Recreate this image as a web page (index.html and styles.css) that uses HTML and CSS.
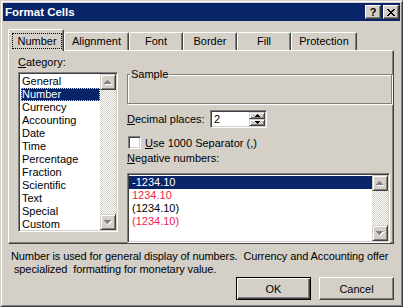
FILE: index.html
```html
<!DOCTYPE html>
<html lang="en">
<head>
  <meta charset="UTF-8">
  <title>Format Cells</title>
  <link rel="stylesheet" href="styles.css">
</head>
<body>
  <div class="window">
    <div class="titlebar">
      <span class="title">Format Cells</span>
      <div class="title-buttons">
        <div class="tbtn help">?</div>
        <div class="tbtn close">
          <svg width="8" height="7" viewBox="0 0 8 7" shape-rendering="crispEdges"><path fill="#000" d="M0 0h2v1H0z M6 0h2v1H6z M1 1h2v1H1z M5 1h2v1H5z M2 2h4v1H2z M3 3h2v1H3z M2 4h4v1H2z M1 5h2v1H1z M5 5h2v1H5z M0 6h2v1H0z M6 6h2v1H6z"/></svg>
        </div>
      </div>
    </div>

    <div class="tabs">
      <div class="tab active tab-number"><span class="focus">Number</span></div>
      <div class="tab tab-alignment">Alignment</div>
      <div class="tab tab-font">Font</div>
      <div class="tab tab-border">Border</div>
      <div class="tab tab-fill">Fill</div>
      <div class="tab tab-protection">Protection</div>
    </div>

    <div class="panel">
      <div class="col-left">
        <div class="lbl"><u>C</u>ategory:</div>
        <div class="listbox cat-list">
          <ul class="items">
            <li>General</li>
            <li class="sel focused">Number</li>
            <li>Currency</li>
            <li>Accounting</li>
            <li>Date</li>
            <li>Time</li>
            <li>Percentage</li>
            <li>Fraction</li>
            <li>Scientific</li>
            <li>Text</li>
            <li>Special</li>
            <li>Custom</li>
          </ul>
          <div class="vscroll">
            <div class="sbtn">
              <svg width="8" height="5" viewBox="0 0 8 5" shape-rendering="crispEdges"><path fill="#fff" d="M4 1h1v1H4z M3 2h3v1H3z M2 3h5v1H2z M1 4h7v1H1z"/><path fill="#808080" d="M3 0h1v1H3z M2 1h3v1H2z M1 2h5v1H1z M0 3h7v1H0z"/></svg>
            </div>
            <div class="track"></div>
            <div class="sbtn">
              <svg width="8" height="5" viewBox="0 0 8 5" shape-rendering="crispEdges"><path fill="#fff" d="M1 1h7v1H1z M2 2h5v1H2z M3 3h3v1H3z M4 4h1v1H4z"/><path fill="#808080" d="M0 0h7v1H0z M1 1h5v1H1z M2 2h3v1H2z M3 3h1v1H3z"/></svg>
            </div>
          </div>
        </div>
      </div>

      <div class="col-right">
        <fieldset class="sample">
          <legend>Sample</legend>
          <div class="sample-body"></div>
        </fieldset>

        <div class="decimal-row">
          <div class="lbl dec-label"><u>D</u>ecimal places:</div>
          <div class="spin">
            <span class="spin-value">2</span>
            <div class="spin-btns">
              <div class="spin-btn">
                <svg width="5" height="3" viewBox="0 0 5 3" shape-rendering="crispEdges"><path fill="#000" d="M2 0h1v1H2z M1 1h3v1H1z M0 2h5v1H0z"/></svg>
              </div>
              <div class="spin-btn">
                <svg width="5" height="3" viewBox="0 0 5 3" shape-rendering="crispEdges"><path fill="#000" d="M0 0h5v1H0z M1 1h3v1H1z M2 2h1v1H2z"/></svg>
              </div>
            </div>
          </div>
        </div>

        <div class="check-row">
          <span class="checkbox"></span>
          <span><u>U</u>se 1000 Separator (,)</span>
        </div>

        <div class="lbl neg-label"><u>N</u>egative numbers:</div>
        <div class="listbox neg-list">
          <ul class="items">
            <li class="sel">-1234.10</li>
            <li class="red">1234.10</li>
            <li>(1234.10)</li>
            <li class="red">(1234.10)</li>
          </ul>
          <div class="vscroll">
            <div class="sbtn">
              <svg width="8" height="5" viewBox="0 0 8 5" shape-rendering="crispEdges"><path fill="#fff" d="M4 1h1v1H4z M3 2h3v1H3z M2 3h5v1H2z M1 4h7v1H1z"/><path fill="#808080" d="M3 0h1v1H3z M2 1h3v1H2z M1 2h5v1H1z M0 3h7v1H0z"/></svg>
            </div>
            <div class="track"></div>
            <div class="sbtn">
              <svg width="8" height="5" viewBox="0 0 8 5" shape-rendering="crispEdges"><path fill="#fff" d="M1 1h7v1H1z M2 2h5v1H2z M3 3h3v1H3z M4 4h1v1H4z"/><path fill="#808080" d="M0 0h7v1H0z M1 1h5v1H1z M2 2h3v1H2z M3 3h1v1H3z"/></svg>
            </div>
          </div>
        </div>
      </div>
    </div>

    <p class="desc">Number is used for general display of numbers.  Currency and Accounting offer
 specialized  formatting for monetary value.</p>

    <div class="actions">
      <button class="btn default">OK</button>
      <button class="btn">Cancel</button>
    </div>
  </div>
</body>
</html>
```

FILE: styles.css
```css
* { box-sizing: border-box; }
body {
  margin: 0;
  font-family: 'Liberation Sans', Arial, sans-serif;
  font-size: 11px;
  color: #000;
  background-color: #d4d0c8;
}
.window {
  width: 403px;
  height: 307px;
  background-color: #d4d0c8;
  border: 1px solid;
  border-color: #d4d0c8 #404040 #404040 #d4d0c8;
  box-shadow: inset 1px 1px #fff, inset -1px -1px #808080;
  padding: 2px;
}

/* title bar */
.titlebar {
  height: 18px;
  background-color: #0a246a;
  display: flex;
  align-items: center;
  justify-content: space-between;
  padding: 0 1px 0 2px;
}
.title {
  color: white;
  font-weight: bold;
  font-size: 11.5px;
}
.title-buttons {
  display: flex;
  gap: 2px;
}
.tbtn {
  width: 16px;
  height: 14px;
  background-color: #d4d0c8;
  border: 1px solid;
  border-color: #fff #404040 #404040 #fff;
  box-shadow: inset -1px -1px #808080;
  display: flex;
  align-items: center;
  justify-content: center;
}
.help {
  font-weight: bold;
  font-size: 11px;
  line-height: 12px;
}
.tbtn svg { display: block; }

/* tabs */
.tabs {
  display: flex;
  align-items: flex-end;
  height: 21px;
  margin-top: 8px;
  padding-left: 5px;
}
.tab {
  height: 18px;
  line-height: 16px;
  text-align: center;
  background-color: #d4d0c8;
  border-top: 1px solid #fff;
  border-left: 1px solid #fff;
  border-right: 1px solid #404040;
  box-shadow: inset -1px 0 #808080;
  border-radius: 2px 2px 0 0;
}
.tab.active {
  height: 22px;
  margin-bottom: -1px;
  position: relative;
  z-index: 1;
}
.focus {
  display: block;
  height: 16px;
  line-height: 14px;
  margin: 3px 1px 0 3px;
  border: 1px dotted #000;
}
.tab-number { width: 56px; }
.tab-alignment { width: 65px; }
.tab-font { width: 54px; }
.tab-border { width: 54px; }
.tab-fill { width: 54px; }
.tab-protection { width: 66px; }

/* panel */
.panel {
  margin-left: 5px;
  width: 386px;
  height: 194px;
  border: 1px solid;
  border-color: #fff #404040 #404040 #fff;
  box-shadow: inset -1px -1px #808080;
  padding: 5px 0 0 9px;
  display: flex;
  gap: 9px;
}
.lbl {
  height: 13px;
  line-height: 13px;
}
.col-left { width: 100px; }
.col-left .lbl { margin-bottom: 3px; }
.col-right {
  width: 265px;
  display: flex;
  flex-direction: column;
}

/* list boxes */
.listbox {
  display: flex;
  background-color: #fff;
  border: 1px solid;
  border-color: #808080 #fff #fff #808080;
  box-shadow: inset 1px 1px #404040, inset -1px -1px #d4d0c8;
  padding: 1px;
}
.items {
  flex: 1;
  list-style: none;
  margin: 1px 0 0 1px;
  padding: 0;
}
.items li {
  height: 13px;
  line-height: 13px;
  padding-left: 1px;
  white-space: nowrap;
}
.items li.sel {
  background-color: #0a246a;
  color: white;
}
.items li.focused {
  outline: 1px dotted #e8d880;
  outline-offset: -1px;
}
.items li.red { color: #f2244e; }
.cat-list {
  width: 100px;
  height: 160px;
}
.neg-list {
  margin-top: 8px;
  width: 263px;
  height: 70px;
}
.neg-list .items { margin-left: 0; }
.neg-list .items li { padding-left: 3px; }

.vscroll {
  width: 16px;
  display: flex;
  flex-direction: column;
}
.sbtn {
  height: 16px;
  background-color: #d4d0c8;
  border: 1px solid;
  border-color: #d4d0c8 #404040 #404040 #d4d0c8;
  box-shadow: inset 1px 1px #fff, inset -1px -1px #808080;
  display: flex;
  align-items: center;
  justify-content: center;
}
.sbtn svg { display: block; }
.track {
  flex: 1;
  background: repeating-conic-gradient(#fff 0 25%, #d4d0c8 0 50%) 0 0 / 2px 2px;
}

/* sample group */
.sample {
  margin: 12px 0 0 0;
  padding: 0;
  min-width: 0;
  border: 1px solid #808080;
  box-shadow: inset 1px 1px #fff, 1px 1px #fff;
}
.sample legend {
  margin-left: 2px;
  padding: 0 1px;
  line-height: 13px;
  background-color: #d4d0c8;
}
.sample-body { height: 22px; }

/* decimal places */
.decimal-row {
  display: flex;
  align-items: center;
  margin-top: 6px;
  height: 18px;
}
.dec-label { width: 83px; }
.spin {
  width: 57px;
  height: 18px;
  display: flex;
  background-color: #fff;
  border: 1px solid;
  border-color: #808080 #fff #fff #808080;
  box-shadow: inset 1px 1px #404040, inset -1px -1px #d4d0c8;
  padding: 1px;
}
.spin-value {
  flex: 1;
  padding-left: 2px;
  line-height: 14px;
}
.spin-btns {
  width: 16px;
  display: flex;
  flex-direction: column;
}
.spin-btn {
  flex: 1;
  background-color: #d4d0c8;
  border: 1px solid;
  border-color: #d4d0c8 #404040 #404040 #d4d0c8;
  box-shadow: inset 1px 1px #fff, inset -1px -1px #808080;
  display: flex;
  align-items: center;
  justify-content: center;
}
.spin-btn svg { display: block; }

/* checkbox */
.check-row {
  display: flex;
  align-items: center;
  gap: 4px;
  height: 13px;
  margin: 8px 0 0 1px;
}
.checkbox {
  width: 13px;
  height: 13px;
  background-color: #fff;
  border: 1px solid;
  border-color: #808080 #fff #fff #808080;
  box-shadow: inset 1px 1px #404040, inset -1px -1px #d4d0c8;
}
.neg-label { margin-top: 3px; }

/* bottom */
.desc {
  margin: 6px 0 0 8px;
  line-height: 13px;
  letter-spacing: -0.1px;
  white-space: pre;
}
.actions {
  display: flex;
  justify-content: flex-end;
  gap: 8px;
  margin-top: 1px;
  padding-right: 6px;
}
.btn {
  width: 75px;
  height: 23px;
  padding: 0;
  font-family: inherit;
  font-size: 11px;
  color: #000;
  background-color: #d4d0c8;
  border: 1px solid;
  border-color: #fff #404040 #404040 #fff;
  box-shadow: inset -1px -1px #808080;
}
.btn.default {
  border-color: #000;
  box-shadow: inset 1px 1px #fff, inset -1px -1px #404040, inset -2px -2px #808080;
}
```
